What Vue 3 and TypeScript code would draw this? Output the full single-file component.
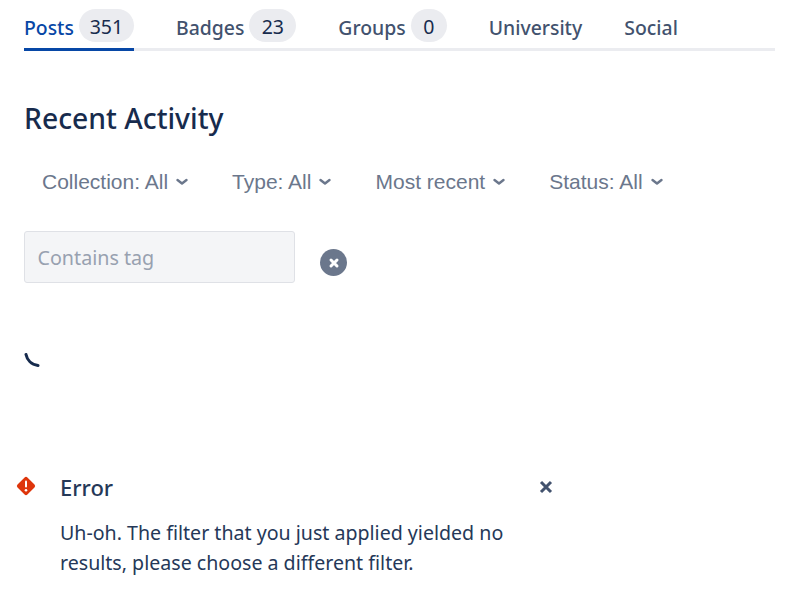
<script setup lang="ts">
const tabs = [
  { label: 'Posts', count: '351', pill: 55, active: true },
  { label: 'Badges', count: '23', pill: 47 },
  { label: 'Groups', count: '0', pill: 36 },
  { label: 'University' },
  { label: 'Social' },
]
const filters = ['Collection: All', 'Type: All', 'Most recent', 'Status: All']
</script>

<template>
  <main class="page">
    <nav class="tabs">
      <a v-for="t in tabs" :key="t.label" class="tab" :class="{ active: t.active }">
        <span>{{ t.label }}</span>
        <span v-if="t.count" class="count" :style="{ width: t.pill + 'px' }">{{ t.count }}</span>
      </a>
    </nav>
    <h2 class="title">Recent Activity</h2>
    <div class="filters">
      <button v-for="f in filters" :key="f" class="filter">
        <span>{{ f }}</span>
        <svg width="14" height="10" viewBox="0 0 14 10" fill="none"><path d="M2.5 3 7 6.5 11.5 3" stroke="currentColor" stroke-width="2.4" stroke-linecap="round" stroke-linejoin="round"/></svg>
      </button>
    </div>
    <div class="tagrow">
      <input class="tag" placeholder="Contains tag" />
      <span class="clear">
        <svg width="12" height="12" viewBox="0 0 12 12"><path d="M3 3l6 6M9 3l-6 6" stroke="#fff" stroke-width="3" stroke-linecap="round"/></svg>
      </span>
    </div>
    <svg class="spinner" width="16" height="16" viewBox="0 0 16 16" fill="none"><path d="M2 1.5C3 6.5 7 11.5 14 12.5" stroke="#172b4d" stroke-width="3" stroke-linecap="round"/></svg>
    <section class="flag">
      <svg class="warn" width="22" height="22" viewBox="0 0 22 22"><rect x="4" y="4" width="14" height="14" rx="2" transform="rotate(45 11 11)" fill="#de350b"/><rect x="10" y="5.5" width="2" height="7" rx="1" fill="#fff"/><circle cx="11" cy="15.2" r="1.3" fill="#fff"/></svg>
      <div class="flagbody">
        <div class="flaghead">
          <h3>Error</h3>
          <svg width="14" height="14" viewBox="0 0 14 14"><path d="M2 2l10 10M12 2L2 12" stroke="#42526e" stroke-width="3"/></svg>
        </div>
        <p>Uh-oh. The filter that you just applied yielded no results, please choose a different filter.</p>
      </div>
    </section>
  </main>
</template>

<style scoped>
.page { width: 792px; height: 599px; box-sizing: border-box; padding: 9px 17px 0 24px; font-family: "Noto Sans", sans-serif; color: #172b4d; overflow: hidden; }
.tabs { display: flex; gap: 42px; border-bottom: 3px solid #ebecf0; height: 39px; }
.tab { display: flex; align-items: center; gap: 5px; height: 36px; padding-bottom: 3px; border-bottom: 3px solid transparent; font-size: 19.4px; font-weight: 500; color: #42526e; }
.tab.active { color: #0747a6; border-bottom-color: #0747a6; }
.count { height: 33px; padding-top: 1px; box-sizing: border-box; border-radius: 17px; background: #ebecf0; color: #172b4d; display: flex; align-items: center; justify-content: center; font-size: 19.5px; font-weight: 400; margin-top: -3px; }
.title { margin: 48px 0 0; font-size: 28.3px; line-height: 38px; font-weight: 500; color: #172b4d; }
.filters { display: flex; gap: 43px; margin-top: 29px; padding-left: 18px; }
.filter { display: flex; align-items: center; gap: 7px; padding: 0; border: 0; background: none; font-family: "Liberation Sans", sans-serif; font-size: 21px; line-height: 32px; color: #6b778c; }
.tagrow { display: flex; align-items: center; margin-top: 33px; gap: 25px; }
.tag { width: 271px; height: 52px; box-sizing: border-box; border: 1px solid #dfe1e6; border-radius: 3px; background: #f4f5f7; padding: 1px 13px 0 12.5px; font-family: "Noto Sans", sans-serif; font-size: 19.7px; }
.tag::placeholder { color: #98a1b0; opacity: 1; }
.clear { width: 27px; height: 27px; border-radius: 50%; background: #6b778c; display: flex; align-items: center; justify-content: center; margin-top: 11px; }
.spinner { display: block; margin-top: 70px; }
.flag { display: flex; margin: 103px 0 0 -9px; width: 538px; gap: 23px; }
.warn { flex: none; margin-top: 3px; }
.flagbody { flex: 1; }
.flaghead { display: flex; justify-content: space-between; align-items: center; }
.flaghead h3 { margin: 0; font-size: 22px; line-height: 30px; font-weight: 500; color: #253858; }
.flagbody p { margin: 16px 0 0; font-size: 19.6px; line-height: 30px; color: #253858; width: 470px; }
</style>
